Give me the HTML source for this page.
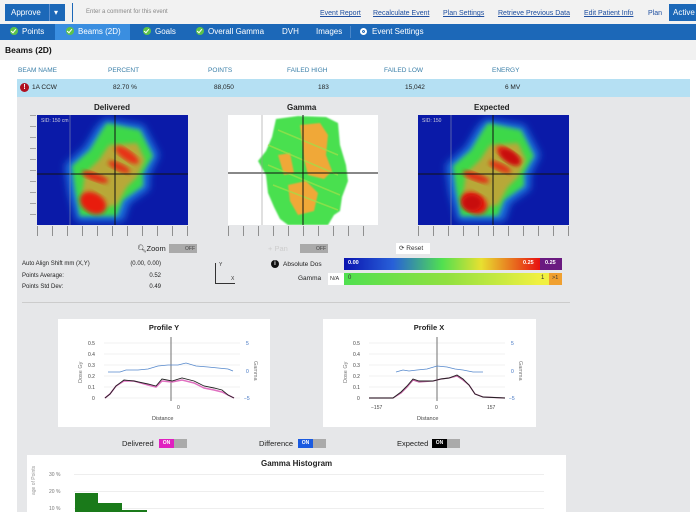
<!DOCTYPE html>
<html><head><meta charset="utf-8"><style>
*{margin:0;padding:0;box-sizing:border-box}
body{width:696px;height:516px;overflow:hidden;background:#fff;font-family:"Liberation Sans",sans-serif;font-size:7px;color:#333;position:relative}
.a{position:absolute;white-space:nowrap}
.lnk{color:#1f4fa0;text-decoration:underline;font-size:7px;top:10px}
.nav{top:24px;left:0;width:696px;height:16px;background:#1c68b8}
.ni{top:24px;height:16px;line-height:16px;color:#fff;font-size:8px}
.ck{display:inline-block;width:8px;height:8px;border-radius:50%;background:#5cc24a;vertical-align:-1px;margin-right:4px;position:relative}
.ck:after{content:"";position:absolute;left:2px;top:1px;width:2px;height:4px;border:solid #fff;border-width:0 1.3px 1.3px 0;transform:rotate(40deg)}
.th{top:67px;color:#3a7fa8;font-size:6.5px}
.td{top:84px;font-size:6.5px;color:#222}
.tg{height:9px;width:28px;background:#aaa;font-size:5px;color:#fff;display:flex;align-items:center}
.tg b{display:block;width:15px;text-align:center;height:9px;line-height:9px}
.tg i{font-style:normal;color:#444;padding-left:1px}
.ttl{font-weight:bold;font-size:8px;color:#222}
.tick{height:10px;background:repeating-linear-gradient(90deg,#555 0 1px,transparent 1px 15px);opacity:.6}
</style></head><body>
<div class="a" style="left:0;top:0;width:696px;height:24px;background:#f2f2f2"></div>
<div class="a" style="left:5px;top:4px;width:60px;height:17px;background:#1c68b8;color:#fff;font-size:8px;line-height:17px;padding-left:6px">Approve <span style="display:inline-block;width:1px;height:17px;background:#5a8fd0;vertical-align:top;margin:0 4px 0 6px"></span>▾</div>
<div class="a" style="left:72px;top:3px;width:1px;height:19px;background:#1c68b8"></div>
<div class="a" style="left:86px;top:9px;color:#888;font-size:6px">Enter a comment for this event</div>
<div class="a lnk" style="left:320px">Event Report</div>
<div class="a lnk" style="left:373px">Recalculate Event</div>
<div class="a lnk" style="left:443px">Plan Settings</div>
<div class="a lnk" style="left:498px">Retrieve Previous Data</div>
<div class="a lnk" style="left:584px">Edit Patient Info</div>
<div class="a" style="left:648px;top:10px;color:#1f4fa0;font-size:7px">Plan</div>
<div class="a" style="left:669px;top:4px;width:30px;height:17px;background:#1c68b8;color:#fff;font-size:8px;line-height:17px;padding-left:4px">Active</div>
<div class="a nav"></div>
<div class="a" style="left:55px;top:24px;width:75px;height:16px;background:#3a8ee0"></div>
<div class="a ni" style="left:10px"><span class="ck"></span>Points</div>
<div class="a ni" style="left:66px"><span class="ck"></span>Beams (2D)</div>
<div class="a ni" style="left:143px"><span class="ck"></span>Goals</div>
<div class="a ni" style="left:196px"><span class="ck"></span>Overall Gamma</div>
<div class="a ni" style="left:282px">DVH</div>
<div class="a ni" style="left:316px">Images</div>
<div class="a" style="left:350px;top:26px;width:1px;height:12px;background:#4a86c8"></div>
<div class="a ni" style="left:360px"><span style="display:inline-block;width:7px;height:7px;border-radius:50%;background:#fff;margin-right:5px;vertical-align:-1px;border:2px solid #fff;box-shadow:inset 0 0 0 1px #1c68b8"></span>Event Settings</div>
<div class="a" style="left:0;top:40px;width:696px;height:20px;background:#f1f1f1"></div>
<div class="a" style="left:5px;top:45px;font-weight:bold;font-size:8.5px;color:#111">Beams (2D)</div>
<div class="a th" style="left:18px">BEAM NAME</div>
<div class="a th" style="left:108px">PERCENT</div>
<div class="a th" style="left:208px">POINTS</div>
<div class="a th" style="left:287px">FAILED HIGH</div>
<div class="a th" style="left:384px">FAILED LOW</div>
<div class="a th" style="left:492px">ENERGY</div>
<div class="a" style="left:17px;top:79px;width:673px;height:18px;background:#b5e0f3"></div>
<div class="a" style="left:20px;top:83px;width:9px;height:9px;border-radius:50%;background:#b01020;color:#fff;font-size:7px;font-weight:bold;text-align:center;line-height:9px">!</div>
<div class="a td" style="left:32px">1A CCW</div>
<div class="a td" style="left:113px">82.70 %</div>
<div class="a td" style="left:214px">88,050</div>
<div class="a td" style="left:318px">183</div>
<div class="a td" style="left:405px">15,042</div>
<div class="a td" style="left:505px">6 MV</div>
<div class="a" style="left:17px;top:97px;width:673px;height:415px;background:#e6e7e9"></div>
<div class="a ttl" style="left:94px;top:103px">Delivered</div>
<div class="a ttl" style="left:287px;top:103px">Gamma</div>
<div class="a ttl" style="left:474px;top:103px">Expected</div>

<svg class="a" style="left:0;top:0" width="0" height="0"><defs>
<filter id="b4"><feGaussianBlur stdDeviation="4"/></filter>
<filter id="b2"><feGaussianBlur stdDeviation="2.2"/></filter>
<filter id="b1"><feGaussianBlur stdDeviation="0.8"/></filter>
<g id="dose">
<rect width="151" height="110" fill="#0a1aa8"/>
<polygon filter="url(#b4)" fill="#1f78e0" points="68,4 106,10 122,40 112,60 112,74 92,88 86,106 40,106 32,78 28,50 48,32 60,12"/>
<polygon filter="url(#b2)" fill="#3ed848" points="70,8 103,15 116,41 106,58 106,71 86,85 80,101 43,101 38,75 35,51 53,35 65,15"/>
<polygon filter="url(#b2)" fill="#b8a838" points="72,30 100,28 108,45 100,62 90,72 80,90 55,95 45,80 48,58 62,45"/>
<ellipse filter="url(#b2)" cx="90" cy="40" rx="14" ry="5" transform="rotate(35 90 40)" fill="#e83018"/>
<ellipse filter="url(#b2)" cx="82" cy="52" rx="12" ry="4" transform="rotate(25 82 52)" fill="#e03818"/>
<ellipse filter="url(#b2)" cx="58" cy="62" rx="14" ry="4" transform="rotate(20 58 62)" fill="#e03018"/>
<ellipse filter="url(#b2)" cx="56" cy="88" rx="14" ry="10" transform="rotate(30 56 88)" fill="#e81a10"/>
</g>
</defs></svg>
<!-- delivered -->
<div class="a" style="left:37px;top:115px;width:151px;height:110px;overflow:hidden">
<svg width="151" height="110"><use href="#dose"/>
<line x1="0" y1="59" x2="151" y2="59" stroke="#111" stroke-width="1"/>
<line x1="78" y1="0" x2="78" y2="110" stroke="#111" stroke-width="1"/>
<line x1="33" y1="0" x2="33" y2="110" stroke="#8890b0" stroke-width="0.6"/>
<text x="4" y="7" fill="#ccd" font-size="5" font-family="Liberation Sans">SID: 150 cm</text></svg></div>
<div class="a tick" style="left:37px;top:226px;width:151px"></div>
<div class="a" style="left:30px;top:115px;width:6px;height:110px;background:repeating-linear-gradient(180deg,#777 0 1px,transparent 1px 11px);opacity:.6"></div>
<!-- gamma -->
<div class="a" style="left:228px;top:115px;width:150px;height:110px;background:#fff;overflow:hidden">
<svg width="150" height="110">
<polygon filter="url(#b1)" fill="#48e050" points="48,4 70,1 98,2 110,8 112,30 118,50 120,66 114,82 112,96 106,100 100,110 60,110 52,104 46,92 40,78 38,60 30,46 38,36 44,22"/>
<g filter="url(#b1)" fill="#f0a838">
<polygon points="72,10 92,8 100,20 98,40 104,56 96,64 80,60 76,44 74,26"/>
<polygon points="60,70 78,66 90,78 86,96 70,100 62,86"/>
<polygon points="50,40 62,38 66,58 56,60"/>
</g>
<g stroke="#a0e048" stroke-width="1.5" opacity="0.7"><line x1="40" y1="30" x2="110" y2="60"/><line x1="40" y1="50" x2="112" y2="80"/><line x1="45" y1="70" x2="110" y2="95"/><line x1="50" y1="15" x2="110" y2="40"/></g>
<line x1="0" y1="58" x2="150" y2="58" stroke="#111"/>
<line x1="75" y1="0" x2="75" y2="110" stroke="#111"/>
<line x1="34" y1="0" x2="34" y2="110" stroke="#999" stroke-width="0.6"/></svg></div>
<div class="a tick" style="left:228px;top:226px;width:150px"></div>
<!-- expected -->
<div class="a" style="left:418px;top:115px;width:151px;height:110px;overflow:hidden">
<svg width="151" height="110"><use href="#dose"/>
<ellipse filter="url(#b2)" cx="92" cy="42" rx="12" ry="6" transform="rotate(35 92 42)" fill="#c81010"/>
<ellipse filter="url(#b2)" cx="54" cy="88" rx="10" ry="8" fill="#c81010"/>
<line x1="0" y1="59" x2="151" y2="59" stroke="#111" stroke-width="1"/>
<line x1="75" y1="0" x2="75" y2="110" stroke="#111" stroke-width="1"/>
<line x1="33" y1="0" x2="33" y2="110" stroke="#8890b0" stroke-width="0.6"/>
<text x="4" y="7" fill="#ccd" font-size="5" font-family="Liberation Sans">SID: 150</text></svg></div>
<div class="a tick" style="left:418px;top:226px;width:151px"></div>
<!-- controls -->
<div class="a" style="left:137px;top:244px;font-size:7.5px;color:#222">&#x1F50D;&#xFE0E;Zoom</div>
<div class="a tg" style="left:169px;top:244px"><b></b><i>OFF</i></div>
<div class="a" style="left:268px;top:244px;font-size:7.5px;color:#ccc">+ Pan</div>
<div class="a tg" style="left:300px;top:244px"><b></b><i>OFF</i></div>
<div class="a" style="left:396px;top:243px;width:34px;height:11px;background:#fff;font-size:6.5px;line-height:11px;padding-left:3px">⟳ Reset</div>
<div class="a" style="left:22px;top:259px;font-size:6px;color:#222;line-height:11.5px">Auto Align Shift mm (X,Y)<br>Points Average:<br>Points Std Dev:</div>
<div class="a" style="left:120px;top:259px;font-size:6px;color:#222;line-height:11.5px;text-align:right;width:41px">(0.00, 0.00)<br>0.52<br>0.49</div>
<div class="a" style="left:215px;top:263px;width:1px;height:20px;background:#333"></div>
<div class="a" style="left:215px;top:283px;width:20px;height:1px;background:#333"></div>
<div class="a" style="left:219px;top:262px;font-size:5px">Y</div>
<div class="a" style="left:231px;top:276px;font-size:5px">X</div>
<div class="a" style="left:271px;top:260px;width:8px;height:8px;border-radius:50%;background:#111;color:#fff;font-size:6px;text-align:center;line-height:8px;font-weight:bold">i</div>
<div class="a" style="left:283px;top:261px;font-size:6.5px;color:#222">Absolute Dos</div>
<div class="a" style="left:344px;top:258px;width:196px;height:12px;background:linear-gradient(90deg,#0a14b0,#2860d8 25%,#50e050 50%,#e8e030 70%,#e81010 100%)"></div>
<div class="a" style="left:540px;top:258px;width:22px;height:12px;background:#6a1a80"></div>
<div class="a" style="left:348px;top:260px;color:#fff;font-size:5.5px;font-weight:bold">0.00</div>
<div class="a" style="left:523px;top:260px;color:#fff;font-size:5.5px;font-weight:bold">0.25</div>
<div class="a" style="left:545px;top:260px;color:#fff;font-size:5.5px;font-weight:bold">0.25</div>
<div class="a" style="left:298px;top:275px;font-size:6.5px;color:#222">Gamma</div>
<div class="a" style="left:328px;top:273px;width:16px;height:12px;background:#fff;font-size:5.5px;line-height:12px;padding-left:2px">N/A</div>
<div class="a" style="left:344px;top:273px;width:205px;height:12px;background:linear-gradient(90deg,#50e050,#90e040 50%,#f0f040 95%)"></div>
<div class="a" style="left:549px;top:273px;width:13px;height:12px;background:#f0a030"></div>
<div class="a" style="left:348px;top:275px;font-size:6px">0</div>
<div class="a" style="left:541px;top:275px;font-size:6px">1</div>
<div class="a" style="left:552px;top:275px;font-size:5.5px">&gt;1</div>
<div class="a" style="left:22px;top:302px;width:548px;height:1px;background:#ccc"></div>
<!-- profile Y -->
<div class="a" style="left:58px;top:319px;width:212px;height:108px;background:#fff">
<svg width="212" height="108" style="position:absolute;left:0;top:0" font-family="Liberation Sans" font-size="5">
<text x="106" y="11" text-anchor="middle" font-size="7.5" font-weight="bold" fill="#222">Profile Y</text>
<g stroke="#e4e4e4" stroke-width="0.6"><line x1="46" y1="24" x2="182" y2="24"/><line x1="46" y1="35" x2="182" y2="35"/><line x1="46" y1="46" x2="182" y2="46"/><line x1="46" y1="57" x2="182" y2="57"/><line x1="46" y1="68" x2="182" y2="68"/><line x1="46" y1="79" x2="182" y2="79"/></g>
<g fill="#444"><text x="30" y="26">0.5</text><text x="30" y="37">0.4</text><text x="30" y="48">0.3</text><text x="30" y="59">0.2</text><text x="30" y="70">0.1</text><text x="34" y="81">0</text><text x="119" y="90">0</text><text x="94" y="101" font-size="5.5">Distance</text></g>
<g fill="#3a6fc0"><text x="188" y="26">5</text><text x="188" y="54">0</text><text x="186" y="81">−5</text></g>
<text transform="translate(24,64) rotate(-90)" fill="#777" font-size="5.5">Dose Gy</text>
<text transform="translate(196,42) rotate(90)" fill="#777" font-size="5.5">Gamma</text>
<line x1="113" y1="18" x2="113" y2="82" stroke="#888" stroke-width="1.2"/>
<polyline fill="none" stroke="#5588cc" stroke-width="0.8" points="50,53 62,53 68,51 80,51 90,50 100,47 110,46 120,46 128,44 138,47 150,48 160,49 170,50 175,52"/>
<polyline fill="none" stroke="#e070c0" stroke-width="1.5" points="47,79 52,75 58,67 66,62 76,62 90,66 98,68 104,62 114,63 124,61 136,64 146,69 156,71 164,73 170,76 176,79"/>
<polyline fill="none" stroke="#222" stroke-width="0.9" points="47,79 52,75 58,67 66,61 76,62 90,65 98,67 104,60 114,62 124,59 136,62 146,67 156,69 164,71 170,76 176,79"/>
</svg></div>
<!-- profile X -->
<div class="a" style="left:323px;top:319px;width:213px;height:108px;background:#fff">
<svg width="213" height="108" style="position:absolute;left:0;top:0" font-family="Liberation Sans" font-size="5">
<text x="106" y="11" text-anchor="middle" font-size="7.5" font-weight="bold" fill="#222">Profile X</text>
<g stroke="#e4e4e4" stroke-width="0.6"><line x1="46" y1="24" x2="182" y2="24"/><line x1="46" y1="35" x2="182" y2="35"/><line x1="46" y1="46" x2="182" y2="46"/><line x1="46" y1="57" x2="182" y2="57"/><line x1="46" y1="68" x2="182" y2="68"/><line x1="46" y1="79" x2="182" y2="79"/></g>
<g fill="#444"><text x="30" y="26">0.5</text><text x="30" y="37">0.4</text><text x="30" y="48">0.3</text><text x="30" y="59">0.2</text><text x="30" y="70">0.1</text><text x="34" y="81">0</text><text x="48" y="90">−157</text><text x="112" y="90">0</text><text x="164" y="90">157</text><text x="94" y="101" font-size="5.5">Distance</text></g>
<g fill="#3a6fc0"><text x="188" y="26">5</text><text x="188" y="54">0</text><text x="186" y="81">−5</text></g>
<text transform="translate(24,64) rotate(-90)" fill="#777" font-size="5.5">Dose Gy</text>
<text transform="translate(196,42) rotate(90)" fill="#777" font-size="5.5">Gamma</text>
<line x1="114" y1="18" x2="114" y2="82" stroke="#888" stroke-width="1.2"/>
<polyline fill="none" stroke="#5588cc" stroke-width="0.8" points="73,53 80,51 86,52 94,51 104,50 114,47 124,48 132,50 140,51 150,53 160,53"/>
<polyline fill="none" stroke="#c060a0" stroke-width="1.3" points="46,79 70,79 78,74 84,68 90,61 96,63 110,62 118,60 126,59 134,57 140,61 146,66 152,75 160,78 182,79"/>
<polyline fill="none" stroke="#222" stroke-width="0.9" points="46,79 70,79 78,73 84,67 90,60 96,62 110,62 118,60 126,59 134,56 140,60 146,66 152,75 160,78 182,79"/>
</svg></div>
<!-- toggles -->
<div class="a" style="left:122px;top:439px;font-size:7.5px;color:#222">Delivered</div>
<div class="a tg" style="left:159px;top:439px"><b style="background:#e020c0">ON</b></div>
<div class="a" style="left:259px;top:439px;font-size:7.5px;color:#222">Difference</div>
<div class="a tg" style="left:298px;top:439px"><b style="background:#1a5ae0">ON</b></div>
<div class="a" style="left:397px;top:439px;font-size:7.5px;color:#222">Expected</div>
<div class="a tg" style="left:432px;top:439px"><b style="background:#000">ON</b></div>
<!-- histogram -->
<div class="a" style="left:27px;top:455px;width:539px;height:61px;background:#fff">
<div class="a ttl" style="left:234px;top:4px">Gamma Histogram</div>
<div class="a" style="left:47px;top:19px;width:470px;height:1px;background:#eee"></div>
<div class="a" style="left:47px;top:36px;width:470px;height:1px;background:#eee"></div>
<div class="a" style="left:47px;top:53px;width:470px;height:1px;background:#eee"></div>
<div class="a" style="left:22px;top:17px;font-size:5px;color:#777">30 %</div>
<div class="a" style="left:22px;top:34px;font-size:5px;color:#777">20 %</div>
<div class="a" style="left:22px;top:51px;font-size:5px;color:#777">10 %</div>
<div class="a" style="left:4px;top:40px;font-size:5px;color:#999;transform:rotate(-90deg);transform-origin:left top">age of Points</div>
<div class="a" style="left:48px;top:38px;width:23px;height:23px;background:#1a7a1a"></div>
<div class="a" style="left:71px;top:48px;width:24px;height:13px;background:#1a7a1a"></div>
<div class="a" style="left:95px;top:55px;width:25px;height:6px;background:#1a7a1a"></div>
</div>
<div class="a" style="left:0;top:512px;width:696px;height:4px;background:#fff"></div>
</body></html>
